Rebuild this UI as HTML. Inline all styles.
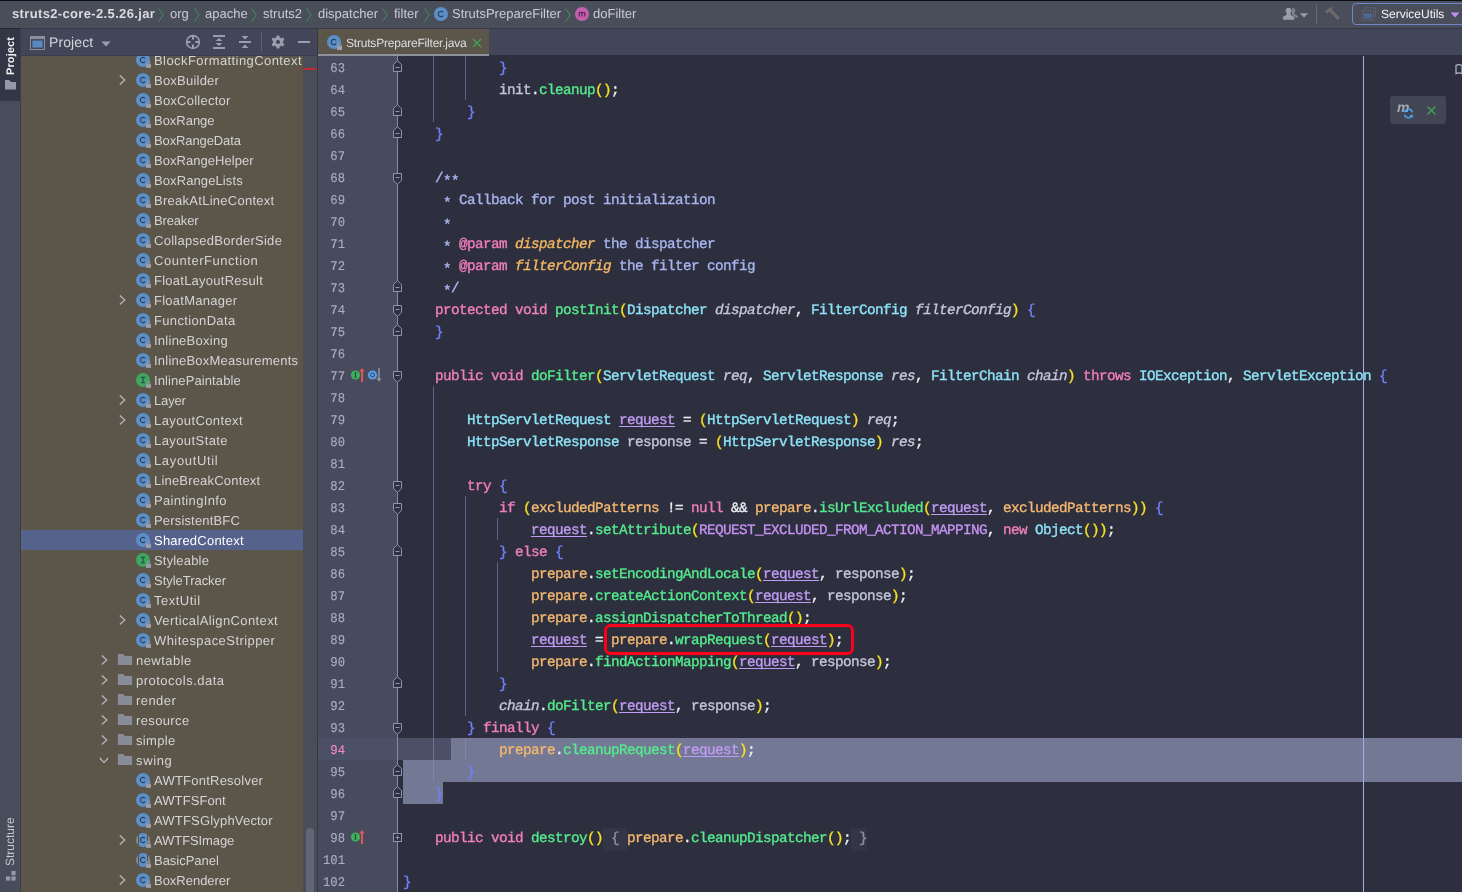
<!DOCTYPE html>
<html><head><meta charset="utf-8"><title>StrutsPrepareFilter</title>
<style>
*{box-sizing:border-box;margin:0;padding:0}
html,body{width:1462px;height:892px;overflow:hidden;background:#2d2f3f}
body{-webkit-font-smoothing:antialiased;text-rendering:geometricPrecision;position:relative;font-family:"Liberation Sans",sans-serif;font-size:13px;color:#d0d2da}
.abs{position:absolute}
svg{display:block}
#blk{position:absolute;left:0;top:0;width:1462px;height:1px;background:#0c0d12}
#top{position:absolute;left:0;top:1px;width:1462px;height:27px;background:#4a4e5b}
#topb{position:absolute;left:0;top:28px;width:1462px;height:1px;background:#363946}
.bc{position:absolute;top:0;height:27px;line-height:26px;font-size:13px;color:#c9ccd4;white-space:nowrap}
.bcsep{position:absolute;top:6px}
#stripe{position:absolute;left:0;top:29px;width:20px;height:863px;background:#494d5b}
#stripesel{position:absolute;left:0;top:0;width:20px;height:72px;background:#333644}
#stripeb{position:absolute;left:20px;top:29px;width:1px;height:863px;background:#3a3d4b}
.vt{position:absolute;white-space:nowrap;transform-origin:0 0;transform:rotate(-90deg);font-size:11px;line-height:12px}
#phdr{position:absolute;left:21px;top:29px;width:296px;height:27px;background:#434659;border-bottom:1px solid #3a3d4c}
#tree{position:absolute;left:21px;top:56px;width:282px;height:836px;background:#5b5649;overflow:hidden}
.row{position:absolute;left:0;width:282px;height:20px}
.row.sel{background:#55628c}
.row.sel .tl{color:#ffffff}
.tl{top:1px;line-height:20px;font-size:13px;color:#d3d4d6;white-space:nowrap;letter-spacing:0.2px}
#sbar{position:absolute;left:303px;top:56px;width:14px;height:836px;background:#494c59}
#pborder{position:absolute;left:317px;top:29px;width:1px;height:863px;background:#343746}
#tabs{position:absolute;left:318px;top:29px;width:1144px;height:26px;background:#434659}
#tab{position:absolute;left:0;top:0;width:171px;height:27px;background:#5b5649;border-bottom:2px solid #8d929d}
#ed{position:absolute;left:318px;top:56px;width:1144px;height:836px;background:#2d2f3f;overflow:hidden}
#gut{position:absolute;left:0;top:0;width:79px;height:836px;background:#484b5e}
#foldline{position:absolute;left:79px;top:0;width:1px;height:836px;background:#8489a6}
.ln{position:absolute;left:0;width:27px;height:22px;line-height:27px;text-align:right;font-family:"Liberation Mono",monospace;font-size:13.33px;color:#abb0c1;white-space:pre;-webkit-text-stroke:0.100px currentColor}
.ln{transform:scaleX(0.92);transform-origin:100% 50%}
.ln.cur{color:#f788c6}
.cl{position:absolute;left:85px;height:22px;line-height:27px;font-family:"Liberation Mono",monospace;font-size:14.300px;letter-spacing:-0.581px;color:#eceef4;white-space:pre;-webkit-text-stroke:0.350px currentColor}
.kw{color:#f47fbd}.ty{color:#8de3f7}.fn{color:#54ec8c}.par{color:#f6e21f}.br{color:#7081f8}
.fld{color:#f5b870}.cst{color:#c592f2}.req{color:#c09bf2;text-decoration:underline;text-underline-offset:2px;text-decoration-skip-ink:none;text-decoration-thickness:1.2px}
.it{color:#c4c7da;font-style:italic}.lv{color:#c4c7da}.cm{color:#a8b5ef}.tag{color:#f47fbd}
.dp{color:#f5b862;font-style:italic}
.fold{color:#8c90a6;background:#343647;padding:3px 0 4px}
.guide{position:absolute;width:1px;background:rgba(140,146,205,0.5)}
.selbg{position:absolute;background:#737895}
#margin{position:absolute;left:1045px;top:0;width:1.200px;height:836px;background:#a4acea}

#top,#stripe,#phdr,#tree,#tabs,#ed{will-change:transform}
.ast{font-style:normal;position:relative;top:2.500px}

</style></head><body>
<div id="top">
  <span class="bc" style="left:12px;font-weight:bold;letter-spacing:0.35px;color:#d9dbe1">struts2-core-2.5.26.jar</span>
  <svg class="abs" style="left:158px;top:7px" width="6" height="14" viewBox="0 0 6 14"><path d="M0.600 0.600 5.200 7 0.600 13.400" fill="none" stroke="#3d9456" stroke-width="1"/></svg>
  <span class="bc" style="left:170px">org</span>
  <svg class="abs" style="left:194px;top:7px" width="6" height="14" viewBox="0 0 6 14"><path d="M0.600 0.600 5.200 7 0.600 13.400" fill="none" stroke="#3d9456" stroke-width="1"/></svg>
  <span class="bc" style="left:205px">apache</span>
  <svg class="abs" style="left:251px;top:7px" width="6" height="14" viewBox="0 0 6 14"><path d="M0.600 0.600 5.200 7 0.600 13.400" fill="none" stroke="#3d9456" stroke-width="1"/></svg>
  <span class="bc" style="left:263px">struts2</span>
  <svg class="abs" style="left:306px;top:7px" width="6" height="14" viewBox="0 0 6 14"><path d="M0.600 0.600 5.200 7 0.600 13.400" fill="none" stroke="#3d9456" stroke-width="1"/></svg>
  <span class="bc" style="left:318px">dispatcher</span>
  <svg class="abs" style="left:382px;top:7px" width="6" height="14" viewBox="0 0 6 14"><path d="M0.600 0.600 5.200 7 0.600 13.400" fill="none" stroke="#3d9456" stroke-width="1"/></svg>
  <span class="bc" style="left:394px">filter</span>
  <svg class="abs" style="left:424px;top:7px" width="6" height="14" viewBox="0 0 6 14"><path d="M0.600 0.600 5.200 7 0.600 13.400" fill="none" stroke="#3d9456" stroke-width="1"/></svg>
  <svg class="abs" style="left:434px;top:6px" width="14" height="14" viewBox="0 0 14 14"><circle cx="7" cy="7" r="7" fill="#5a8fc8"/><path d="M9.100 5.400a2.700 2.700 0 1 0 0 3.200" stroke="#2b3f5c" stroke-width="1.150" fill="none"/></svg>
  <span class="bc" style="left:452px">StrutsPrepareFilter</span>
  <svg class="abs" style="left:565px;top:7px" width="6" height="14" viewBox="0 0 6 14"><path d="M0.600 0.600 5.200 7 0.600 13.400" fill="none" stroke="#3d9456" stroke-width="1"/></svg>
  <svg class="abs" style="left:575px;top:6px" width="14" height="14" viewBox="0 0 14 14"><circle cx="7" cy="7" r="7" fill="#c45fae"/><path d="M4.2 9.6V5.2M4.2 6.6c0-1.9 2.8-1.9 2.8 0V9.6M7 6.6c0-1.9 2.8-1.9 2.8 0V9.6" stroke="#4a2344" stroke-width="1.1" fill="none"/></svg>
  <span class="bc" style="left:593px">doFilter</span>

  <!-- right toolbar -->
  <svg class="abs" style="left:1283px;top:6px" width="28" height="14" viewBox="0 0 28 14">
    <path d="M9.2 1.2c1.6-.5 3.1.6 3.1 2.4 0 1-.4 1.9-1 2.5l.3 1.2 3.4 1.6v1.6h-3.2l-.3-1.3-2.6-1.5z" fill="#7f8391"/>
    <path d="M5.6.8C3.800.8 2.700 2 2.700 3.800c0 1.100.4 2.100 1.100 2.800l-.3 1.300L.6 9.400C.2 9.600 0 10 0 10.400V12.800h11.200V10.400c0-.4-.2-.8-.6-1L7.700 7.900 7.400 6.600c.7-.7 1.100-1.700 1.100-2.800C8.500 2 7.400.8 5.600.8z" fill="#9a9eab"/>
    <path d="M16.800 6.200h8.400l-4.200 4.400z" fill="#9a9eab"/>
  </svg>
  <div class="abs" style="left:1316px;top:3px;width:1px;height:20px;background:#686a73"></div>
  <svg class="abs" style="left:1324px;top:5px" width="17" height="16" viewBox="0 0 17 16">
    <path d="M1 5.800 5.600 1.400h3.600L7.600 3.200l8.200 8.600-2.200 2.200L5.400 5.400 3.200 7.800z" fill="#6d6b68"/>
  </svg>
  <div class="abs" style="left:1352px;top:2px;width:124px;height:22px;border:1.3px solid #6c86c9;border-radius:4px;background:#4a4e5b"></div>
  <svg class="abs" style="left:1361px;top:6px" width="16" height="14" viewBox="0 0 16 14">
    <path d="M3.500 3.400V.8H14.600V9.400H12.400" fill="none" stroke="#5c6071" stroke-width="1"/>
    <rect x="1" y="3.800" width="11.400" height="9.400" fill="none" stroke="#5c6071" stroke-width="1"/>
    <rect x="2.600" y="6.400" width="8.200" height="5.200" fill="#4d6796"/>
  </svg>
  <span class="abs" style="left:1381px;top:0;line-height:26px;font-size:12px;color:#f4f4f6;white-space:nowrap">ServiceUtils</span>
  <svg class="abs" style="left:1450px;top:11px" width="10" height="6" viewBox="0 0 10 6"><path d="M0.500 0.400h9L5 5.400z" fill="#c38ff0"/></svg>
</div>
<div id="blk"></div>
<div id="topb"></div><div class="abs" style="left:0;top:28px;width:20px;height:1px;background:#25262f"></div>
<div id="stripe"><div id="stripesel"></div>
  <span class="vt" style="left:5px;top:46px;font-weight:bold;color:#f2f2f4;letter-spacing:0.1px">Project</span>
  <svg class="abs" style="left:5px;top:51px" width="11" height="10" viewBox="0 0 11 10"><path d="M0 0h4.200l1.600 2H11v7.600H0z" fill="#9498a8"/></svg>
  <span class="vt" style="left:4px;top:837px;color:#c6c9d2;font-size:12px">Structure</span>
  <svg class="abs" style="left:6px;top:842px" width="10" height="10" viewBox="0 0 10 10"><rect x="5.400" y="0" width="4.200" height="4.200" fill="#9498a8"/><rect x="0" y="5.400" width="4.200" height="4.200" fill="#9498a8"/><rect x="5.400" y="5.400" width="4.200" height="4.200" fill="#9498a8"/></svg>
</div>
<div id="stripeb"></div>
<div id="phdr">
  <svg class="abs" style="left:9px;top:7px" width="15" height="14" viewBox="0 0 15 14"><rect x="0.500" y="0.500" width="14" height="13" fill="#434659" stroke="#8b8f9d" stroke-width="1"/><rect x="0.500" y="0.500" width="14" height="2.600" fill="#8b8f9d"/><rect x="2.400" y="4.600" width="10.200" height="7" fill="#5889c0"/></svg>
  <span class="abs" style="left:28px;top:0;line-height:27px;font-size:14px;color:#d3d5dc;letter-spacing:0.1px">Project</span>
  <svg class="abs" style="left:80px;top:12px" width="10" height="6" viewBox="0 0 10 6"><path d="M0.400 0.500h9.200L5 5.600z" fill="#9a9eae"/></svg>
  <!-- locate -->
  <svg class="abs" style="left:164px;top:5px" width="16" height="16" viewBox="0 0 16 16"><circle cx="8" cy="8" r="6.400" fill="none" stroke="#9a9eae" stroke-width="1.600"/><path d="M8 1.400V5.600M8 10.400V14.600M1.400 8H5.600M10.400 8H14.600" stroke="#9a9eae" stroke-width="2"/></svg>
  <!-- expand all -->
  <svg class="abs" style="left:192px;top:6px" width="12" height="14" viewBox="0 0 12 14"><rect x="0" y="0" width="12" height="2" fill="#9a9eae"/><rect x="0" y="12" width="12" height="2" fill="#9a9eae"/><path d="M6 2.900 9.500 6.100H2.500z" fill="#9a9eae"/><path d="M6 11.100 9.500 7.900H2.500z" fill="#9a9eae"/></svg>
  <!-- collapse all -->
  <svg class="abs" style="left:218px;top:7px" width="12" height="12" viewBox="0 0 12 12"><rect x="0" y="5" width="12" height="2" fill="#9a9eae"/><path d="M6 3.500 9.400 .100H2.600z" fill="#9a9eae"/><path d="M6 8.500 9.400 11.900H2.600z" fill="#9a9eae"/></svg>
  <div class="abs" style="left:240px;top:3px;width:1px;height:20px;background:#5d6072"></div>
  <!-- gear -->
  <svg class="abs" style="left:250px;top:6px" width="14" height="14" viewBox="0 0 14 14"><g fill="#9a9eae"><circle cx="7" cy="7" r="5"/><rect id="gt" x="5.500" y="0.400" width="3" height="13.200" rx="0.500"/><use href="#gt" transform="rotate(60 7 7)"/><use href="#gt" transform="rotate(120 7 7)"/></g><circle cx="7" cy="7" r="2.100" fill="#434659"/></svg>
  <!-- minus -->
  <div class="abs" style="left:277px;top:12px;width:12px;height:2px;background:#9a9eae"></div>
</div>
<div id="tree">
<div class="row" style="top:-6px"><span class="abs" style="left:115px;top:2px"><svg class="ic" width="16" height="18" viewBox="0 0 16 18"><circle cx="7" cy="8" r="7" fill="#5a8fc8"/><path d="M9.050 6.450a2.600 2.600 0 1 0 0 3.100" stroke="#2b3f5c" stroke-width="1.100" fill="none"/><rect x="10" y="12.1" width="5" height="3.800" fill="#9b9da9"/><path d="M11.1 12.299999999999999 v-1.600 a1.400 1.400 0 0 1 2.800 0 v1.600" fill="none" stroke="#9b9da9" stroke-width="1"/></svg></span><span class="abs tl" style="left:133px;letter-spacing:0.419px">BlockFormattingContext</span></div>
<div class="row" style="top:14px"><svg class="abs" style="left:98px;top:5px" width="7" height="10" viewBox="0 0 7 10"><path d="M0.8 0.4 L5.8 4.9 L0.8 9.4" fill="none" stroke="#b2b4ba" stroke-width="1.3"/></svg><span class="abs" style="left:115px;top:2px"><svg class="ic" width="16" height="18" viewBox="0 0 16 18"><circle cx="7" cy="8" r="7" fill="#5a8fc8"/><path d="M9.050 6.450a2.600 2.600 0 1 0 0 3.100" stroke="#2b3f5c" stroke-width="1.100" fill="none"/><rect x="10" y="12.1" width="5" height="3.800" fill="#9b9da9"/><path d="M11.1 12.299999999999999 v-1.600 a1.400 1.400 0 0 1 2.800 0 v1.600" fill="none" stroke="#9b9da9" stroke-width="1"/></svg></span><span class="abs tl" style="left:133px;letter-spacing:0.223px">BoxBuilder</span></div>
<div class="row" style="top:34px"><span class="abs" style="left:115px;top:2px"><svg class="ic" width="16" height="18" viewBox="0 0 16 18"><circle cx="7" cy="8" r="7" fill="#5a8fc8"/><path d="M9.050 6.450a2.600 2.600 0 1 0 0 3.100" stroke="#2b3f5c" stroke-width="1.100" fill="none"/><rect x="10" y="12.1" width="5" height="3.800" fill="#9b9da9"/><path d="M11.1 12.299999999999999 v-1.600 a1.400 1.400 0 0 1 2.800 0 v1.600" fill="none" stroke="#9b9da9" stroke-width="1"/></svg></span><span class="abs tl" style="left:133px;letter-spacing:0.237px">BoxCollector</span></div>
<div class="row" style="top:54px"><span class="abs" style="left:115px;top:2px"><svg class="ic" width="16" height="18" viewBox="0 0 16 18"><circle cx="7" cy="8" r="7" fill="#5a8fc8"/><path d="M9.050 6.450a2.600 2.600 0 1 0 0 3.100" stroke="#2b3f5c" stroke-width="1.100" fill="none"/><rect x="10" y="12.1" width="5" height="3.800" fill="#9b9da9"/><path d="M11.1 12.299999999999999 v-1.600 a1.400 1.400 0 0 1 2.800 0 v1.600" fill="none" stroke="#9b9da9" stroke-width="1"/></svg></span><span class="abs tl" style="left:133px;letter-spacing:-0.028px">BoxRange</span></div>
<div class="row" style="top:74px"><span class="abs" style="left:115px;top:2px"><svg class="ic" width="16" height="18" viewBox="0 0 16 18"><circle cx="7" cy="8" r="7" fill="#5a8fc8"/><path d="M9.050 6.450a2.600 2.600 0 1 0 0 3.100" stroke="#2b3f5c" stroke-width="1.100" fill="none"/><rect x="10" y="12.1" width="5" height="3.800" fill="#9b9da9"/><path d="M11.1 12.299999999999999 v-1.600 a1.400 1.400 0 0 1 2.800 0 v1.600" fill="none" stroke="#9b9da9" stroke-width="1"/></svg></span><span class="abs tl" style="left:133px;letter-spacing:-0.109px">BoxRangeData</span></div>
<div class="row" style="top:94px"><span class="abs" style="left:115px;top:2px"><svg class="ic" width="16" height="18" viewBox="0 0 16 18"><circle cx="7" cy="8" r="7" fill="#5a8fc8"/><path d="M9.050 6.450a2.600 2.600 0 1 0 0 3.100" stroke="#2b3f5c" stroke-width="1.100" fill="none"/><rect x="10" y="12.1" width="5" height="3.800" fill="#9b9da9"/><path d="M11.1 12.299999999999999 v-1.600 a1.400 1.400 0 0 1 2.800 0 v1.600" fill="none" stroke="#9b9da9" stroke-width="1"/></svg></span><span class="abs tl" style="left:133px;letter-spacing:0.046px">BoxRangeHelper</span></div>
<div class="row" style="top:114px"><span class="abs" style="left:115px;top:2px"><svg class="ic" width="16" height="18" viewBox="0 0 16 18"><circle cx="7" cy="8" r="7" fill="#5a8fc8"/><path d="M9.050 6.450a2.600 2.600 0 1 0 0 3.100" stroke="#2b3f5c" stroke-width="1.100" fill="none"/><rect x="10" y="12.1" width="5" height="3.800" fill="#9b9da9"/><path d="M11.1 12.299999999999999 v-1.600 a1.400 1.400 0 0 1 2.800 0 v1.600" fill="none" stroke="#9b9da9" stroke-width="1"/></svg></span><span class="abs tl" style="left:133px;letter-spacing:0.1px">BoxRangeLists</span></div>
<div class="row" style="top:134px"><span class="abs" style="left:115px;top:2px"><svg class="ic" width="16" height="18" viewBox="0 0 16 18"><circle cx="7" cy="8" r="7" fill="#5a8fc8"/><path d="M9.050 6.450a2.600 2.600 0 1 0 0 3.100" stroke="#2b3f5c" stroke-width="1.100" fill="none"/><rect x="10" y="12.1" width="5" height="3.800" fill="#9b9da9"/><path d="M11.1 12.299999999999999 v-1.600 a1.400 1.400 0 0 1 2.800 0 v1.600" fill="none" stroke="#9b9da9" stroke-width="1"/></svg></span><span class="abs tl" style="left:133px;letter-spacing:0.271px">BreakAtLineContext</span></div>
<div class="row" style="top:154px"><span class="abs" style="left:115px;top:2px"><svg class="ic" width="16" height="18" viewBox="0 0 16 18"><circle cx="7" cy="8" r="7" fill="#5a8fc8"/><path d="M9.050 6.450a2.600 2.600 0 1 0 0 3.100" stroke="#2b3f5c" stroke-width="1.100" fill="none"/><rect x="10" y="12.1" width="5" height="3.800" fill="#9b9da9"/><path d="M11.1 12.299999999999999 v-1.600 a1.400 1.400 0 0 1 2.800 0 v1.600" fill="none" stroke="#9b9da9" stroke-width="1"/></svg></span><span class="abs tl" style="left:133px;letter-spacing:-0.166px">Breaker</span></div>
<div class="row" style="top:174px"><span class="abs" style="left:115px;top:2px"><svg class="ic" width="16" height="18" viewBox="0 0 16 18"><circle cx="7" cy="8" r="7" fill="#5a8fc8"/><path d="M9.050 6.450a2.600 2.600 0 1 0 0 3.100" stroke="#2b3f5c" stroke-width="1.100" fill="none"/><rect x="10" y="12.1" width="5" height="3.800" fill="#9b9da9"/><path d="M11.1 12.299999999999999 v-1.600 a1.400 1.400 0 0 1 2.800 0 v1.600" fill="none" stroke="#9b9da9" stroke-width="1"/></svg></span><span class="abs tl" style="left:133px;letter-spacing:0.278px">CollapsedBorderSide</span></div>
<div class="row" style="top:194px"><span class="abs" style="left:115px;top:2px"><svg class="ic" width="16" height="18" viewBox="0 0 16 18"><circle cx="7" cy="8" r="7" fill="#5a8fc8"/><path d="M9.050 6.450a2.600 2.600 0 1 0 0 3.100" stroke="#2b3f5c" stroke-width="1.100" fill="none"/><rect x="10" y="12.1" width="5" height="3.800" fill="#9b9da9"/><path d="M11.1 12.299999999999999 v-1.600 a1.400 1.400 0 0 1 2.800 0 v1.600" fill="none" stroke="#9b9da9" stroke-width="1"/></svg></span><span class="abs tl" style="left:133px;letter-spacing:0.543px">CounterFunction</span></div>
<div class="row" style="top:214px"><span class="abs" style="left:115px;top:2px"><svg class="ic" width="16" height="18" viewBox="0 0 16 18"><circle cx="7" cy="8" r="7" fill="#5a8fc8"/><path d="M9.050 6.450a2.600 2.600 0 1 0 0 3.100" stroke="#2b3f5c" stroke-width="1.100" fill="none"/><rect x="10" y="12.1" width="5" height="3.800" fill="#9b9da9"/><path d="M11.1 12.299999999999999 v-1.600 a1.400 1.400 0 0 1 2.800 0 v1.600" fill="none" stroke="#9b9da9" stroke-width="1"/></svg></span><span class="abs tl" style="left:133px;letter-spacing:0.249px">FloatLayoutResult</span></div>
<div class="row" style="top:234px"><svg class="abs" style="left:98px;top:5px" width="7" height="10" viewBox="0 0 7 10"><path d="M0.8 0.4 L5.8 4.9 L0.8 9.4" fill="none" stroke="#b2b4ba" stroke-width="1.3"/></svg><span class="abs" style="left:115px;top:2px"><svg class="ic" width="16" height="18" viewBox="0 0 16 18"><circle cx="7" cy="8" r="7" fill="#5a8fc8"/><path d="M9.050 6.450a2.600 2.600 0 1 0 0 3.100" stroke="#2b3f5c" stroke-width="1.100" fill="none"/><rect x="10" y="12.1" width="5" height="3.800" fill="#9b9da9"/><path d="M11.1 12.299999999999999 v-1.600 a1.400 1.400 0 0 1 2.800 0 v1.600" fill="none" stroke="#9b9da9" stroke-width="1"/></svg></span><span class="abs tl" style="left:133px;letter-spacing:0.255px">FloatManager</span></div>
<div class="row" style="top:254px"><span class="abs" style="left:115px;top:2px"><svg class="ic" width="16" height="18" viewBox="0 0 16 18"><circle cx="7" cy="8" r="7" fill="#5a8fc8"/><path d="M9.050 6.450a2.600 2.600 0 1 0 0 3.100" stroke="#2b3f5c" stroke-width="1.100" fill="none"/><rect x="10" y="12.1" width="5" height="3.800" fill="#9b9da9"/><path d="M11.1 12.299999999999999 v-1.600 a1.400 1.400 0 0 1 2.800 0 v1.600" fill="none" stroke="#9b9da9" stroke-width="1"/></svg></span><span class="abs tl" style="left:133px;letter-spacing:0.346px">FunctionData</span></div>
<div class="row" style="top:274px"><span class="abs" style="left:115px;top:2px"><svg class="ic" width="16" height="18" viewBox="0 0 16 18"><circle cx="7" cy="8" r="7" fill="#5a8fc8"/><path d="M9.050 6.450a2.600 2.600 0 1 0 0 3.100" stroke="#2b3f5c" stroke-width="1.100" fill="none"/><rect x="10" y="12.1" width="5" height="3.800" fill="#9b9da9"/><path d="M11.1 12.299999999999999 v-1.600 a1.400 1.400 0 0 1 2.800 0 v1.600" fill="none" stroke="#9b9da9" stroke-width="1"/></svg></span><span class="abs tl" style="left:133px;letter-spacing:0.254px">InlineBoxing</span></div>
<div class="row" style="top:294px"><span class="abs" style="left:115px;top:2px"><svg class="ic" width="16" height="18" viewBox="0 0 16 18"><circle cx="7" cy="8" r="7" fill="#5a8fc8"/><path d="M9.050 6.450a2.600 2.600 0 1 0 0 3.100" stroke="#2b3f5c" stroke-width="1.100" fill="none"/><rect x="10" y="12.1" width="5" height="3.800" fill="#9b9da9"/><path d="M11.1 12.299999999999999 v-1.600 a1.400 1.400 0 0 1 2.800 0 v1.600" fill="none" stroke="#9b9da9" stroke-width="1"/></svg></span><span class="abs tl" style="left:133px;letter-spacing:0.23px">InlineBoxMeasurements</span></div>
<div class="row" style="top:314px"><span class="abs" style="left:115px;top:2px"><svg class="ic" width="16" height="18" viewBox="0 0 16 18"><circle cx="7" cy="8" r="7" fill="#3fa55f"/><path d="M5 5.300h4M5 10.700h4M7 5.300v5.400" stroke="#1f5444" stroke-width="1.150" fill="none"/><rect x="10" y="12.1" width="5" height="3.800" fill="#9b9da9"/><path d="M11.1 12.299999999999999 v-1.600 a1.400 1.400 0 0 1 2.800 0 v1.600" fill="none" stroke="#9b9da9" stroke-width="1"/></svg></span><span class="abs tl" style="left:133px;letter-spacing:0.1px">InlinePaintable</span></div>
<div class="row" style="top:334px"><svg class="abs" style="left:98px;top:5px" width="7" height="10" viewBox="0 0 7 10"><path d="M0.8 0.4 L5.8 4.9 L0.8 9.4" fill="none" stroke="#b2b4ba" stroke-width="1.3"/></svg><span class="abs" style="left:115px;top:2px"><svg class="ic" width="16" height="18" viewBox="0 0 16 18"><circle cx="7" cy="8" r="7" fill="#5a8fc8"/><path d="M9.050 6.450a2.600 2.600 0 1 0 0 3.100" stroke="#2b3f5c" stroke-width="1.100" fill="none"/><rect x="10" y="12.1" width="5" height="3.800" fill="#9b9da9"/><path d="M11.1 12.299999999999999 v-1.600 a1.400 1.400 0 0 1 2.800 0 v1.600" fill="none" stroke="#9b9da9" stroke-width="1"/></svg></span><span class="abs tl" style="left:133px;letter-spacing:-0.15px">Layer</span></div>
<div class="row" style="top:354px"><svg class="abs" style="left:98px;top:5px" width="7" height="10" viewBox="0 0 7 10"><path d="M0.8 0.4 L5.8 4.9 L0.8 9.4" fill="none" stroke="#b2b4ba" stroke-width="1.3"/></svg><span class="abs" style="left:115px;top:2px"><svg class="ic" width="16" height="18" viewBox="0 0 16 18"><circle cx="7" cy="8" r="7" fill="#5a8fc8"/><path d="M9.050 6.450a2.600 2.600 0 1 0 0 3.100" stroke="#2b3f5c" stroke-width="1.100" fill="none"/><rect x="10" y="12.1" width="5" height="3.800" fill="#9b9da9"/><path d="M11.1 12.299999999999999 v-1.600 a1.400 1.400 0 0 1 2.800 0 v1.600" fill="none" stroke="#9b9da9" stroke-width="1"/></svg></span><span class="abs tl" style="left:133px;letter-spacing:0.4px">LayoutContext</span></div>
<div class="row" style="top:374px"><span class="abs" style="left:115px;top:2px"><svg class="ic" width="16" height="18" viewBox="0 0 16 18"><circle cx="7" cy="8" r="7" fill="#5a8fc8"/><path d="M9.050 6.450a2.600 2.600 0 1 0 0 3.100" stroke="#2b3f5c" stroke-width="1.100" fill="none"/><rect x="10" y="12.1" width="5" height="3.800" fill="#9b9da9"/><path d="M11.1 12.299999999999999 v-1.600 a1.400 1.400 0 0 1 2.800 0 v1.600" fill="none" stroke="#9b9da9" stroke-width="1"/></svg></span><span class="abs tl" style="left:133px;letter-spacing:0.42px">LayoutState</span></div>
<div class="row" style="top:394px"><span class="abs" style="left:115px;top:2px"><svg class="ic" width="16" height="18" viewBox="0 0 16 18"><circle cx="7" cy="8" r="7" fill="#5a8fc8"/><path d="M9.050 6.450a2.600 2.600 0 1 0 0 3.100" stroke="#2b3f5c" stroke-width="1.100" fill="none"/><rect x="10" y="12.1" width="5" height="3.800" fill="#9b9da9"/><path d="M11.1 12.299999999999999 v-1.600 a1.400 1.400 0 0 1 2.800 0 v1.600" fill="none" stroke="#9b9da9" stroke-width="1"/></svg></span><span class="abs tl" style="left:133px;letter-spacing:0.644px">LayoutUtil</span></div>
<div class="row" style="top:414px"><span class="abs" style="left:115px;top:2px"><svg class="ic" width="16" height="18" viewBox="0 0 16 18"><circle cx="7" cy="8" r="7" fill="#5a8fc8"/><path d="M9.050 6.450a2.600 2.600 0 1 0 0 3.100" stroke="#2b3f5c" stroke-width="1.100" fill="none"/><rect x="10" y="12.1" width="5" height="3.800" fill="#9b9da9"/><path d="M11.1 12.299999999999999 v-1.600 a1.400 1.400 0 0 1 2.800 0 v1.600" fill="none" stroke="#9b9da9" stroke-width="1"/></svg></span><span class="abs tl" style="left:133px;letter-spacing:0.187px">LineBreakContext</span></div>
<div class="row" style="top:434px"><span class="abs" style="left:115px;top:2px"><svg class="ic" width="16" height="18" viewBox="0 0 16 18"><circle cx="7" cy="8" r="7" fill="#5a8fc8"/><path d="M9.050 6.450a2.600 2.600 0 1 0 0 3.100" stroke="#2b3f5c" stroke-width="1.100" fill="none"/><rect x="10" y="12.1" width="5" height="3.800" fill="#9b9da9"/><path d="M11.1 12.299999999999999 v-1.600 a1.400 1.400 0 0 1 2.800 0 v1.600" fill="none" stroke="#9b9da9" stroke-width="1"/></svg></span><span class="abs tl" style="left:133px;letter-spacing:0.345px">PaintingInfo</span></div>
<div class="row" style="top:454px"><span class="abs" style="left:115px;top:2px"><svg class="ic" width="16" height="18" viewBox="0 0 16 18"><circle cx="7" cy="8" r="7" fill="#5a8fc8"/><path d="M9.050 6.450a2.600 2.600 0 1 0 0 3.100" stroke="#2b3f5c" stroke-width="1.100" fill="none"/><rect x="10" y="12.1" width="5" height="3.800" fill="#9b9da9"/><path d="M11.1 12.299999999999999 v-1.600 a1.400 1.400 0 0 1 2.800 0 v1.600" fill="none" stroke="#9b9da9" stroke-width="1"/></svg></span><span class="abs tl" style="left:133px;letter-spacing:0.167px">PersistentBFC</span></div>
<div class="row sel" style="top:474px"><span class="abs" style="left:115px;top:2px"><svg class="ic" width="16" height="18" viewBox="0 0 16 18"><circle cx="7" cy="8" r="7" fill="#5a8fc8"/><path d="M9.050 6.450a2.600 2.600 0 1 0 0 3.100" stroke="#2b3f5c" stroke-width="1.100" fill="none"/><rect x="10" y="12.1" width="5" height="3.800" fill="#9b9da9"/><path d="M11.1 12.299999999999999 v-1.600 a1.400 1.400 0 0 1 2.800 0 v1.600" fill="none" stroke="#9b9da9" stroke-width="1"/></svg></span><span class="abs tl" style="left:133px;letter-spacing:0.233px">SharedContext</span></div>
<div class="row" style="top:494px"><span class="abs" style="left:115px;top:2px"><svg class="ic" width="16" height="18" viewBox="0 0 16 18"><circle cx="7" cy="8" r="7" fill="#3fa55f"/><path d="M5 5.300h4M5 10.700h4M7 5.300v5.400" stroke="#1f5444" stroke-width="1.150" fill="none"/><rect x="10" y="12.1" width="5" height="3.800" fill="#9b9da9"/><path d="M11.1 12.299999999999999 v-1.600 a1.400 1.400 0 0 1 2.800 0 v1.600" fill="none" stroke="#9b9da9" stroke-width="1"/></svg></span><span class="abs tl" style="left:133px;letter-spacing:0.176px">Styleable</span></div>
<div class="row" style="top:514px"><span class="abs" style="left:115px;top:2px"><svg class="ic" width="16" height="18" viewBox="0 0 16 18"><circle cx="7" cy="8" r="7" fill="#5a8fc8"/><path d="M9.050 6.450a2.600 2.600 0 1 0 0 3.100" stroke="#2b3f5c" stroke-width="1.100" fill="none"/><rect x="10" y="12.1" width="5" height="3.800" fill="#9b9da9"/><path d="M11.1 12.299999999999999 v-1.600 a1.400 1.400 0 0 1 2.800 0 v1.600" fill="none" stroke="#9b9da9" stroke-width="1"/></svg></span><span class="abs tl" style="left:133px;letter-spacing:-0.036px">StyleTracker</span></div>
<div class="row" style="top:534px"><span class="abs" style="left:115px;top:2px"><svg class="ic" width="16" height="18" viewBox="0 0 16 18"><circle cx="7" cy="8" r="7" fill="#5a8fc8"/><path d="M9.050 6.450a2.600 2.600 0 1 0 0 3.100" stroke="#2b3f5c" stroke-width="1.100" fill="none"/><rect x="10" y="12.1" width="5" height="3.800" fill="#9b9da9"/><path d="M11.1 12.299999999999999 v-1.600 a1.400 1.400 0 0 1 2.800 0 v1.600" fill="none" stroke="#9b9da9" stroke-width="1"/></svg></span><span class="abs tl" style="left:133px;letter-spacing:0.486px">TextUtil</span></div>
<div class="row" style="top:554px"><svg class="abs" style="left:98px;top:5px" width="7" height="10" viewBox="0 0 7 10"><path d="M0.8 0.4 L5.8 4.9 L0.8 9.4" fill="none" stroke="#b2b4ba" stroke-width="1.3"/></svg><span class="abs" style="left:115px;top:2px"><svg class="ic" width="16" height="18" viewBox="0 0 16 18"><circle cx="7" cy="8" r="7" fill="#5a8fc8"/><path d="M9.050 6.450a2.600 2.600 0 1 0 0 3.100" stroke="#2b3f5c" stroke-width="1.100" fill="none"/><rect x="10" y="12.1" width="5" height="3.800" fill="#9b9da9"/><path d="M11.1 12.299999999999999 v-1.600 a1.400 1.400 0 0 1 2.800 0 v1.600" fill="none" stroke="#9b9da9" stroke-width="1"/></svg></span><span class="abs tl" style="left:133px;letter-spacing:0.389px">VerticalAlignContext</span></div>
<div class="row" style="top:574px"><span class="abs" style="left:115px;top:2px"><svg class="ic" width="16" height="18" viewBox="0 0 16 18"><circle cx="7" cy="8" r="7" fill="#5a8fc8"/><path d="M9.050 6.450a2.600 2.600 0 1 0 0 3.100" stroke="#2b3f5c" stroke-width="1.100" fill="none"/><rect x="10" y="12.1" width="5" height="3.800" fill="#9b9da9"/><path d="M11.1 12.299999999999999 v-1.600 a1.400 1.400 0 0 1 2.800 0 v1.600" fill="none" stroke="#9b9da9" stroke-width="1"/></svg></span><span class="abs tl" style="left:133px;letter-spacing:0.435px">WhitespaceStripper</span></div>
<div class="row" style="top:594px"><svg class="abs" style="left:80px;top:5px" width="7" height="10" viewBox="0 0 7 10"><path d="M0.8 0.4 L5.8 4.9 L0.8 9.4" fill="none" stroke="#b2b4ba" stroke-width="1.3"/></svg><span class="abs" style="left:96px;top:3px"><svg class="ic" width="16" height="14" viewBox="0 0 16 14"><path d="M0.900 0.900 h5.300 l2 2.100 h6.900 v9 h-14.200 z" fill="#888c96"/></svg></span><span class="abs tl" style="left:115px;letter-spacing:0.457px">newtable</span></div>
<div class="row" style="top:614px"><svg class="abs" style="left:80px;top:5px" width="7" height="10" viewBox="0 0 7 10"><path d="M0.8 0.4 L5.8 4.9 L0.8 9.4" fill="none" stroke="#b2b4ba" stroke-width="1.3"/></svg><span class="abs" style="left:96px;top:3px"><svg class="ic" width="16" height="14" viewBox="0 0 16 14"><path d="M0.900 0.900 h5.300 l2 2.100 h6.900 v9 h-14.200 z" fill="#888c96"/></svg></span><span class="abs tl" style="left:115px;letter-spacing:0.493px">protocols.data</span></div>
<div class="row" style="top:634px"><svg class="abs" style="left:80px;top:5px" width="7" height="10" viewBox="0 0 7 10"><path d="M0.8 0.4 L5.8 4.9 L0.8 9.4" fill="none" stroke="#b2b4ba" stroke-width="1.3"/></svg><span class="abs" style="left:96px;top:3px"><svg class="ic" width="16" height="14" viewBox="0 0 16 14"><path d="M0.900 0.900 h5.300 l2 2.100 h6.900 v9 h-14.200 z" fill="#888c96"/></svg></span><span class="abs tl" style="left:115px;letter-spacing:0.44px">render</span></div>
<div class="row" style="top:654px"><svg class="abs" style="left:80px;top:5px" width="7" height="10" viewBox="0 0 7 10"><path d="M0.8 0.4 L5.8 4.9 L0.8 9.4" fill="none" stroke="#b2b4ba" stroke-width="1.3"/></svg><span class="abs" style="left:96px;top:3px"><svg class="ic" width="16" height="14" viewBox="0 0 16 14"><path d="M0.900 0.900 h5.300 l2 2.100 h6.900 v9 h-14.200 z" fill="#888c96"/></svg></span><span class="abs tl" style="left:115px;letter-spacing:0.371px">resource</span></div>
<div class="row" style="top:674px"><svg class="abs" style="left:80px;top:5px" width="7" height="10" viewBox="0 0 7 10"><path d="M0.8 0.4 L5.8 4.9 L0.8 9.4" fill="none" stroke="#b2b4ba" stroke-width="1.3"/></svg><span class="abs" style="left:96px;top:3px"><svg class="ic" width="16" height="14" viewBox="0 0 16 14"><path d="M0.900 0.900 h5.300 l2 2.100 h6.900 v9 h-14.200 z" fill="#888c96"/></svg></span><span class="abs tl" style="left:115px;letter-spacing:0.32px">simple</span></div>
<div class="row" style="top:694px"><svg class="abs" style="left:78px;top:7px" width="10" height="7" viewBox="0 0 10 7"><path d="M0.8 1 L5 5.6 L9.2 1" fill="none" stroke="#b4b7c0" stroke-width="1.3"/></svg><span class="abs" style="left:96px;top:3px"><svg class="ic" width="16" height="14" viewBox="0 0 16 14"><path d="M0.900 0.900 h5.300 l2 2.100 h6.900 v9 h-14.200 z" fill="#888c96"/></svg></span><span class="abs tl" style="left:115px;letter-spacing:0.65px">swing</span></div>
<div class="row" style="top:714px"><span class="abs" style="left:115px;top:2px"><svg class="ic" width="16" height="18" viewBox="0 0 16 18"><circle cx="7" cy="8" r="7" fill="#5a8fc8"/><path d="M9.050 6.450a2.600 2.600 0 1 0 0 3.100" stroke="#2b3f5c" stroke-width="1.100" fill="none"/><rect x="10" y="12.1" width="5" height="3.800" fill="#9b9da9"/><path d="M11.1 12.299999999999999 v-1.600 a1.400 1.400 0 0 1 2.800 0 v1.600" fill="none" stroke="#9b9da9" stroke-width="1"/></svg></span><span class="abs tl" style="left:133px;letter-spacing:0.229px">AWTFontResolver</span></div>
<div class="row" style="top:734px"><span class="abs" style="left:115px;top:2px"><svg class="ic" width="16" height="18" viewBox="0 0 16 18"><circle cx="7" cy="8" r="7" fill="#5a8fc8"/><path d="M9.050 6.450a2.600 2.600 0 1 0 0 3.100" stroke="#2b3f5c" stroke-width="1.100" fill="none"/><rect x="10" y="12.1" width="5" height="3.800" fill="#9b9da9"/><path d="M11.1 12.299999999999999 v-1.600 a1.400 1.400 0 0 1 2.800 0 v1.600" fill="none" stroke="#9b9da9" stroke-width="1"/></svg></span><span class="abs tl" style="left:133px;letter-spacing:0.076px">AWTFSFont</span></div>
<div class="row" style="top:754px"><span class="abs" style="left:115px;top:2px"><svg class="ic" width="16" height="18" viewBox="0 0 16 18"><circle cx="7" cy="8" r="7" fill="#5a8fc8"/><path d="M9.050 6.450a2.600 2.600 0 1 0 0 3.100" stroke="#2b3f5c" stroke-width="1.100" fill="none"/><rect x="10" y="12.1" width="5" height="3.800" fill="#9b9da9"/><path d="M11.1 12.299999999999999 v-1.600 a1.400 1.400 0 0 1 2.800 0 v1.600" fill="none" stroke="#9b9da9" stroke-width="1"/></svg></span><span class="abs tl" style="left:133px;letter-spacing:0.186px">AWTFSGlyphVector</span></div>
<div class="row" style="top:774px"><svg class="abs" style="left:98px;top:5px" width="7" height="10" viewBox="0 0 7 10"><path d="M0.8 0.4 L5.8 4.9 L0.8 9.4" fill="none" stroke="#b2b4ba" stroke-width="1.3"/></svg><span class="abs" style="left:115px;top:2px"><svg class="ic" width="16" height="18" viewBox="0 0 16 18"><circle cx="7" cy="8" r="7" fill="#888b94"/><rect x="1.900" y="0" width="10.200" height="17" fill="#5b5649"/><clipPath id="cpa"><rect x="2.900" y="0" width="8.200" height="18"/></clipPath><circle cx="7" cy="8" r="7" fill="#5a8fc8" clip-path="url(#cpa)"/><path d="M9.050 6.450a2.600 2.600 0 1 0 0 3.100" stroke="#2b3f5c" stroke-width="1.100" fill="none"/><rect x="10" y="12.1" width="5" height="3.800" fill="#9b9da9"/><path d="M11.1 12.299999999999999 v-1.600 a1.400 1.400 0 0 1 2.800 0 v1.600" fill="none" stroke="#9b9da9" stroke-width="1"/></svg></span><span class="abs tl" style="left:133px;letter-spacing:-0.089px">AWTFSImage</span></div>
<div class="row" style="top:794px"><span class="abs" style="left:115px;top:2px"><svg class="ic" width="16" height="18" viewBox="0 0 16 18"><circle cx="7" cy="8" r="7" fill="#888b94"/><rect x="1.900" y="0" width="10.200" height="17" fill="#5b5649"/><clipPath id="cpa"><rect x="2.900" y="0" width="8.200" height="18"/></clipPath><circle cx="7" cy="8" r="7" fill="#5a8fc8" clip-path="url(#cpa)"/><path d="M9.050 6.450a2.600 2.600 0 1 0 0 3.100" stroke="#2b3f5c" stroke-width="1.100" fill="none"/><rect x="10" y="12.1" width="5" height="3.800" fill="#9b9da9"/><path d="M11.1 12.299999999999999 v-1.600 a1.400 1.400 0 0 1 2.800 0 v1.600" fill="none" stroke="#9b9da9" stroke-width="1"/></svg></span><span class="abs tl" style="left:133px;letter-spacing:-0.022px">BasicPanel</span></div>
<div class="row" style="top:814px"><svg class="abs" style="left:98px;top:5px" width="7" height="10" viewBox="0 0 7 10"><path d="M0.8 0.4 L5.8 4.9 L0.8 9.4" fill="none" stroke="#b2b4ba" stroke-width="1.3"/></svg><span class="abs" style="left:115px;top:2px"><svg class="ic" width="16" height="18" viewBox="0 0 16 18"><circle cx="7" cy="8" r="7" fill="#5a8fc8"/><path d="M9.050 6.450a2.600 2.600 0 1 0 0 3.100" stroke="#2b3f5c" stroke-width="1.100" fill="none"/><rect x="10" y="12.1" width="5" height="3.800" fill="#9b9da9"/><path d="M11.1 12.299999999999999 v-1.600 a1.400 1.400 0 0 1 2.800 0 v1.600" fill="none" stroke="#9b9da9" stroke-width="1"/></svg></span><span class="abs tl" style="left:133px;letter-spacing:-0.02px">BoxRenderer</span></div>
</div>
<div id="sbar">
  <div class="abs" style="left:0;top:12px;width:14px;height:2px;background:#bb2c2c"></div>
  <div class="abs" style="left:3px;top:772px;width:8px;height:80px;border-radius:4px;background:#626674"></div>
</div>
<div id="pborder"></div>
<div id="tabs"><div id="tab">
  <svg class="abs" style="left:9px;top:6px" width="16" height="16" viewBox="0 0 16 16"><circle cx="7" cy="7" r="7" fill="#5a8fc8"/><path d="M9.100 5.400a2.700 2.700 0 1 0 0 3.200" stroke="#2b3f5c" stroke-width="1.150" fill="none"/><rect x="10" y="11" width="5" height="4" fill="#9da0a8"/><path d="M11 11v-1.200a1.500 1.500 0 0 1 3 0V11" fill="none" stroke="#9da0a8" stroke-width="1"/></svg>
  <span class="abs" style="left:28px;top:1px;line-height:27px;font-size:12px;letter-spacing:-0.2px;color:#dcdde1;white-space:nowrap">StrutsPrepareFilter.java</span>
  <svg class="abs" style="left:154px;top:9px" width="10" height="10" viewBox="0 0 10 10"><path d="M1 1 9 9M9 1 1 9" stroke="#3fa55a" stroke-width="1.200"/></svg>
</div></div>
<div id="ed">
  <div id="gut"></div>
  <div class="selbg" style="left:0;top:682px;width:133px;height:22px;background:#4c5067"></div>
  <div class="selbg" style="left:133px;top:682px;width:1011px;height:22px"></div>
  <div class="selbg" style="left:85px;top:704px;width:1059px;height:22px"></div>
  <div class="selbg" style="left:85px;top:726px;width:40px;height:22px"></div>
  <div id="foldline"></div>
<div class="guide" style="left:115px;top:0px;height:66px"></div>
<div class="guide" style="left:147px;top:0px;height:44px"></div>
<div class="guide" style="left:115px;top:330px;height:396px"></div>
<div class="guide" style="left:147px;top:440px;height:220px"></div>
<div class="guide" style="left:147px;top:682px;height:22px"></div>
<div class="guide" style="left:179px;top:462px;height:22px"></div>
<div class="guide" style="left:179px;top:506px;height:110px"></div>
  <div id="margin"></div>
<div class="ln" style="top:0px">63</div>
<div class="cl" style="top:0px">            <span class="br">}</span></div>
<span class="abs" style="left:75px;top:4px"><svg width="9" height="12" viewBox="0 0 9 12"><path d="M0.500 11.500 V4.700 L4.500 0.600 L8.500 4.700 V11.500 Z" fill="#2f3142" stroke="#8f94b2" stroke-width="1"/><path d="M2.500 7.500 H6.500" stroke="#8f94b2" stroke-width="1"/></svg></span>
<div class="ln" style="top:22px">64</div>
<div class="cl" style="top:22px">            <span class="lv">init</span>.<span class="fn">cleanup</span><span class="par">()</span>;</div>
<div class="ln" style="top:44px">65</div>
<div class="cl" style="top:44px">        <span class="br">}</span></div>
<span class="abs" style="left:75px;top:48px"><svg width="9" height="12" viewBox="0 0 9 12"><path d="M0.500 11.500 V4.700 L4.500 0.600 L8.500 4.700 V11.500 Z" fill="#2f3142" stroke="#8f94b2" stroke-width="1"/><path d="M2.500 7.500 H6.500" stroke="#8f94b2" stroke-width="1"/></svg></span>
<div class="ln" style="top:66px">66</div>
<div class="cl" style="top:66px">    <span class="br">}</span></div>
<span class="abs" style="left:75px;top:70px"><svg width="9" height="12" viewBox="0 0 9 12"><path d="M0.500 11.500 V4.700 L4.500 0.600 L8.500 4.700 V11.500 Z" fill="#2f3142" stroke="#8f94b2" stroke-width="1"/><path d="M2.500 7.500 H6.500" stroke="#8f94b2" stroke-width="1"/></svg></span>
<div class="ln" style="top:88px">67</div>
<div class="cl" style="top:88px"></div>
<div class="ln" style="top:110px">68</div>
<div class="cl" style="top:110px">    <span class="cm">/<i class="ast">*</i><i class="ast">*</i></span></div>
<span class="abs" style="left:75px;top:117px"><svg width="9" height="12" viewBox="0 0 9 12"><path d="M0.500 0.500 V7.300 L4.500 11.400 L8.500 7.300 V0.500 Z" fill="#2f3142" stroke="#8f94b2" stroke-width="1"/><path d="M2.500 4.500 H6.500" stroke="#8f94b2" stroke-width="1"/></svg></span>
<div class="ln" style="top:132px">69</div>
<div class="cl" style="top:132px">    <span class="cm"> <i class="ast">*</i> Callback for post initialization</span></div>
<div class="ln" style="top:154px">70</div>
<div class="cl" style="top:154px">    <span class="cm"> <i class="ast">*</i></span></div>
<div class="ln" style="top:176px">71</div>
<div class="cl" style="top:176px">    <span class="cm"> <i class="ast">*</i> </span><span class="tag">@param</span> <span class="dp">dispatcher</span><span class="cm"> the dispatcher</span></div>
<div class="ln" style="top:198px">72</div>
<div class="cl" style="top:198px">    <span class="cm"> <i class="ast">*</i> </span><span class="tag">@param</span> <span class="dp">filterConfig</span><span class="cm"> the filter config</span></div>
<div class="ln" style="top:220px">73</div>
<div class="cl" style="top:220px">    <span class="cm"> <i class="ast">*</i>/</span></div>
<span class="abs" style="left:75px;top:224px"><svg width="9" height="12" viewBox="0 0 9 12"><path d="M0.500 11.500 V4.700 L4.500 0.600 L8.500 4.700 V11.500 Z" fill="#2f3142" stroke="#8f94b2" stroke-width="1"/><path d="M2.500 7.500 H6.500" stroke="#8f94b2" stroke-width="1"/></svg></span>
<div class="ln" style="top:242px">74</div>
<div class="cl" style="top:242px">    <span class="kw">protected void </span><span class="fn">postInit</span><span class="par">(</span><span class="ty">Dispatcher </span><span class="it">dispatcher</span>, <span class="ty">FilterConfig </span><span class="it">filterConfig</span><span class="par">)</span> <span class="br">{</span></div>
<span class="abs" style="left:75px;top:249px"><svg width="9" height="12" viewBox="0 0 9 12"><path d="M0.500 0.500 V7.300 L4.500 11.400 L8.500 7.300 V0.500 Z" fill="#2f3142" stroke="#8f94b2" stroke-width="1"/><path d="M2.500 4.500 H6.500" stroke="#8f94b2" stroke-width="1"/></svg></span>
<div class="ln" style="top:264px">75</div>
<div class="cl" style="top:264px">    <span class="br">}</span></div>
<span class="abs" style="left:75px;top:268px"><svg width="9" height="12" viewBox="0 0 9 12"><path d="M0.500 11.500 V4.700 L4.500 0.600 L8.500 4.700 V11.500 Z" fill="#2f3142" stroke="#8f94b2" stroke-width="1"/><path d="M2.500 7.500 H6.500" stroke="#8f94b2" stroke-width="1"/></svg></span>
<div class="ln" style="top:286px">76</div>
<div class="cl" style="top:286px"></div>
<div class="ln" style="top:308px">77</div>
<div class="cl" style="top:308px">    <span class="kw">public void </span><span class="fn">doFilter</span><span class="par">(</span><span class="ty">ServletRequest </span><span class="it">req</span>, <span class="ty">ServletResponse </span><span class="it">res</span>, <span class="ty">FilterChain </span><span class="it">chain</span><span class="par">)</span> <span class="kw">throws </span><span class="ty">IOException</span>, <span class="ty">ServletException</span> <span class="br">{</span></div>
<span class="abs" style="left:75px;top:315px"><svg width="9" height="12" viewBox="0 0 9 12"><path d="M0.500 0.500 V7.300 L4.500 11.400 L8.500 7.300 V0.500 Z" fill="#2f3142" stroke="#8f94b2" stroke-width="1"/><path d="M2.500 4.500 H6.500" stroke="#8f94b2" stroke-width="1"/></svg></span>
<div class="ln" style="top:330px">78</div>
<div class="cl" style="top:330px"></div>
<div class="ln" style="top:352px">79</div>
<div class="cl" style="top:352px">        <span class="ty">HttpServletRequest </span><span class="req">request</span> = <span class="par">(</span><span class="ty">HttpServletRequest</span><span class="par">)</span> <span class="it">req</span>;</div>
<div class="ln" style="top:374px">80</div>
<div class="cl" style="top:374px">        <span class="ty">HttpServletResponse </span><span class="lv">response</span> = <span class="par">(</span><span class="ty">HttpServletResponse</span><span class="par">)</span> <span class="it">res</span>;</div>
<div class="ln" style="top:396px">81</div>
<div class="cl" style="top:396px"></div>
<div class="ln" style="top:418px">82</div>
<div class="cl" style="top:418px">        <span class="kw">try </span><span class="br">{</span></div>
<span class="abs" style="left:75px;top:425px"><svg width="9" height="12" viewBox="0 0 9 12"><path d="M0.500 0.500 V7.300 L4.500 11.400 L8.500 7.300 V0.500 Z" fill="#2f3142" stroke="#8f94b2" stroke-width="1"/><path d="M2.500 4.500 H6.500" stroke="#8f94b2" stroke-width="1"/></svg></span>
<div class="ln" style="top:440px">83</div>
<div class="cl" style="top:440px">            <span class="kw">if </span><span class="par">(</span><span class="fld">excludedPatterns</span> != <span class="kw">null</span> &amp;&amp; <span class="fld">prepare</span>.<span class="fn">isUrlExcluded</span><span class="par">(</span><span class="req">request</span>, <span class="fld">excludedPatterns</span><span class="par">))</span> <span class="br">{</span></div>
<span class="abs" style="left:75px;top:447px"><svg width="9" height="12" viewBox="0 0 9 12"><path d="M0.500 0.500 V7.300 L4.500 11.400 L8.500 7.300 V0.500 Z" fill="#2f3142" stroke="#8f94b2" stroke-width="1"/><path d="M2.500 4.500 H6.500" stroke="#8f94b2" stroke-width="1"/></svg></span>
<div class="ln" style="top:462px">84</div>
<div class="cl" style="top:462px">                <span class="req">request</span>.<span class="fn">setAttribute</span><span class="par">(</span><span class="cst">REQUEST_EXCLUDED_FROM_ACTION_MAPPING</span>, <span class="kw">new </span><span class="ty">Object</span><span class="par">())</span>;</div>
<div class="ln" style="top:484px">85</div>
<div class="cl" style="top:484px">            <span class="br">} </span><span class="kw">else </span><span class="br">{</span></div>
<span class="abs" style="left:75px;top:488px"><svg width="9" height="12" viewBox="0 0 9 12"><path d="M0.500 11.500 V4.700 L4.500 0.600 L8.500 4.700 V11.500 Z" fill="#2f3142" stroke="#8f94b2" stroke-width="1"/><path d="M2.500 7.500 H6.500" stroke="#8f94b2" stroke-width="1"/></svg></span>
<div class="ln" style="top:506px">86</div>
<div class="cl" style="top:506px">                <span class="fld">prepare</span>.<span class="fn">setEncodingAndLocale</span><span class="par">(</span><span class="req">request</span>, <span class="lv">response</span><span class="par">)</span>;</div>
<div class="ln" style="top:528px">87</div>
<div class="cl" style="top:528px">                <span class="fld">prepare</span>.<span class="fn">createActionContext</span><span class="par">(</span><span class="req">request</span>, <span class="lv">response</span><span class="par">)</span>;</div>
<div class="ln" style="top:550px">88</div>
<div class="cl" style="top:550px">                <span class="fld">prepare</span>.<span class="fn">assignDispatcherToThread</span><span class="par">()</span>;</div>
<div class="ln" style="top:572px">89</div>
<div class="cl" style="top:572px">                <span class="req">request</span> = <span class="fld">prepare</span>.<span class="fn">wrapRequest</span><span class="par">(</span><span class="req">request</span><span class="par">)</span>;</div>
<div class="ln" style="top:594px">90</div>
<div class="cl" style="top:594px">                <span class="fld">prepare</span>.<span class="fn">findActionMapping</span><span class="par">(</span><span class="req">request</span>, <span class="lv">response</span><span class="par">)</span>;</div>
<div class="ln" style="top:616px">91</div>
<div class="cl" style="top:616px">            <span class="br">}</span></div>
<span class="abs" style="left:75px;top:620px"><svg width="9" height="12" viewBox="0 0 9 12"><path d="M0.500 11.500 V4.700 L4.500 0.600 L8.500 4.700 V11.500 Z" fill="#2f3142" stroke="#8f94b2" stroke-width="1"/><path d="M2.500 7.500 H6.500" stroke="#8f94b2" stroke-width="1"/></svg></span>
<div class="ln" style="top:638px">92</div>
<div class="cl" style="top:638px">            <span class="it">chain</span>.<span class="fn">doFilter</span><span class="par">(</span><span class="req">request</span>, <span class="lv">response</span><span class="par">)</span>;</div>
<div class="ln" style="top:660px">93</div>
<div class="cl" style="top:660px">        <span class="br">} </span><span class="kw">finally </span><span class="br">{</span></div>
<span class="abs" style="left:75px;top:667px"><svg width="9" height="12" viewBox="0 0 9 12"><path d="M0.500 0.500 V7.300 L4.500 11.400 L8.500 7.300 V0.500 Z" fill="#2f3142" stroke="#8f94b2" stroke-width="1"/><path d="M2.500 4.500 H6.500" stroke="#8f94b2" stroke-width="1"/></svg></span>
<div class="ln cur" style="top:682px">94</div>
<div class="cl" style="top:682px">            <span class="fld">prepare</span>.<span class="fn">cleanupRequest</span><span class="par">(</span><span class="req">request</span><span class="par">)</span>;</div>
<div class="ln" style="top:704px">95</div>
<div class="cl" style="top:704px">        <span class="br">}</span></div>
<span class="abs" style="left:75px;top:708px"><svg width="9" height="12" viewBox="0 0 9 12"><path d="M0.500 11.500 V4.700 L4.500 0.600 L8.500 4.700 V11.500 Z" fill="#2f3142" stroke="#8f94b2" stroke-width="1"/><path d="M2.500 7.500 H6.500" stroke="#8f94b2" stroke-width="1"/></svg></span>
<div class="ln" style="top:726px">96</div>
<div class="cl" style="top:726px">    <span class="br">}</span></div>
<span class="abs" style="left:75px;top:730px"><svg width="9" height="12" viewBox="0 0 9 12"><path d="M0.500 11.500 V4.700 L4.500 0.600 L8.500 4.700 V11.500 Z" fill="#2f3142" stroke="#8f94b2" stroke-width="1"/><path d="M2.500 7.500 H6.500" stroke="#8f94b2" stroke-width="1"/></svg></span>
<div class="ln" style="top:748px">97</div>
<div class="cl" style="top:748px"></div>
<div class="ln" style="top:770px">98</div>
<div class="cl" style="top:770px">    <span class="kw">public void </span><span class="fn">destroy</span><span class="par">()</span><span class="fold"> { </span><span class="fld">prepare</span>.<span class="fn">cleanupDispatcher</span><span class="par">()</span>;<span class="fold"> }</span></div>
<span class="abs" style="left:75px;top:777px"><svg width="9" height="9" viewBox="0 0 9 9"><rect x="0.500" y="0.500" width="8" height="8" fill="#2f3142" stroke="#8f94b2" stroke-width="1"/><path d="M2.500 4.500 H6.500 M4.500 2.500 V6.500" stroke="#8f94b2" stroke-width="1"/></svg></span>
<div class="ln" style="top:792px">101</div>
<div class="cl" style="top:792px"></div>
<div class="ln" style="top:814px">102</div>
<div class="cl" style="top:814px"><span class="br">}</span></div>
  <!-- gutter icons line 77 -->
  <svg class="abs" style="left:32px;top:311px" width="32" height="16" viewBox="0 0 32 16"><circle cx="5.500" cy="8" r="4.600" fill="#3fae5e"/><path d="M5.500 5.800V10.200M4.600 5.800h1.800M4.600 10.200h1.800" stroke="#1f4a2c" stroke-width="1"/><path d="M12 15V3" stroke="#e25555" stroke-width="2"/><path d="M9.200 4.600 12 1 14.800 4.600z" fill="#e25555"/><circle cx="22.500" cy="8" r="4.600" fill="#5b9ce0"/><circle cx="22.500" cy="8" r="2" fill="none" stroke="#2b4a78" stroke-width="1"/><path d="M29 1V12" stroke="#8b8fa2" stroke-width="1.600"/><path d="M26.200 11.200 29 14.800 31.800 11.200z" fill="#8b8fa2"/></svg>
  <svg class="abs" style="left:32px;top:773px" width="32" height="16" viewBox="0 0 32 16"><circle cx="5.500" cy="8" r="4.600" fill="#3fae5e"/><path d="M5.500 5.800V10.200M4.600 5.800h1.800M4.600 10.200h1.800" stroke="#1f4a2c" stroke-width="1"/><path d="M12 15V3" stroke="#e25555" stroke-width="2"/><path d="M9.200 4.600 12 1 14.800 4.600z" fill="#e25555"/></svg>
  <!-- red annotation box -->
  <div class="abs" style="left:285.700px;top:568.100px;width:250px;height:31px;border:3.300px solid #fa0019;border-radius:6.500px"></div>
  <!-- maven popup -->
  <div class="abs" style="left:1072px;top:40px;width:56px;height:28px;border-radius:3px;background:#424553"></div>
  <span class="abs" style="left:1079px;top:43px;font:italic bold 14px/16px 'Liberation Sans',sans-serif;color:#a3a6b3">m</span>
  <svg class="abs" style="left:1085px;top:52px" width="11" height="11" viewBox="0 0 11 11"><path d="M9.400 4.200A4 4 0 0 0 2 3.400M1.600 6.800A4 4 0 0 0 9 7.600" fill="none" stroke="#4da3f0" stroke-width="1.500"/><path d="M0.600 1.200 1.400 4.600 4.600 3.600z" fill="#4da3f0"/><path d="M10.400 9.800 9.600 6.400 6.400 7.400z" fill="#4da3f0"/></svg>
  <svg class="abs" style="left:1109px;top:50px" width="9" height="9" viewBox="0 0 9 9"><path d="M0.500 0.500 8.500 8.500M8.500 0.500 0.500 8.500" stroke="#3fa55a" stroke-width="1.200"/></svg>
  <!-- bookmark at right edge -->
  <svg class="abs" style="left:1137px;top:8px" width="10" height="11" viewBox="0 0 10 11"><path d="M1 9.600V1.400C3 .4 5 .4 7 1.400V9.600C5 8.600 3 8.600 1 9.600z" fill="none" stroke="#b4b7c4" stroke-width="1.200"/></svg>
</div>
</body></html>
